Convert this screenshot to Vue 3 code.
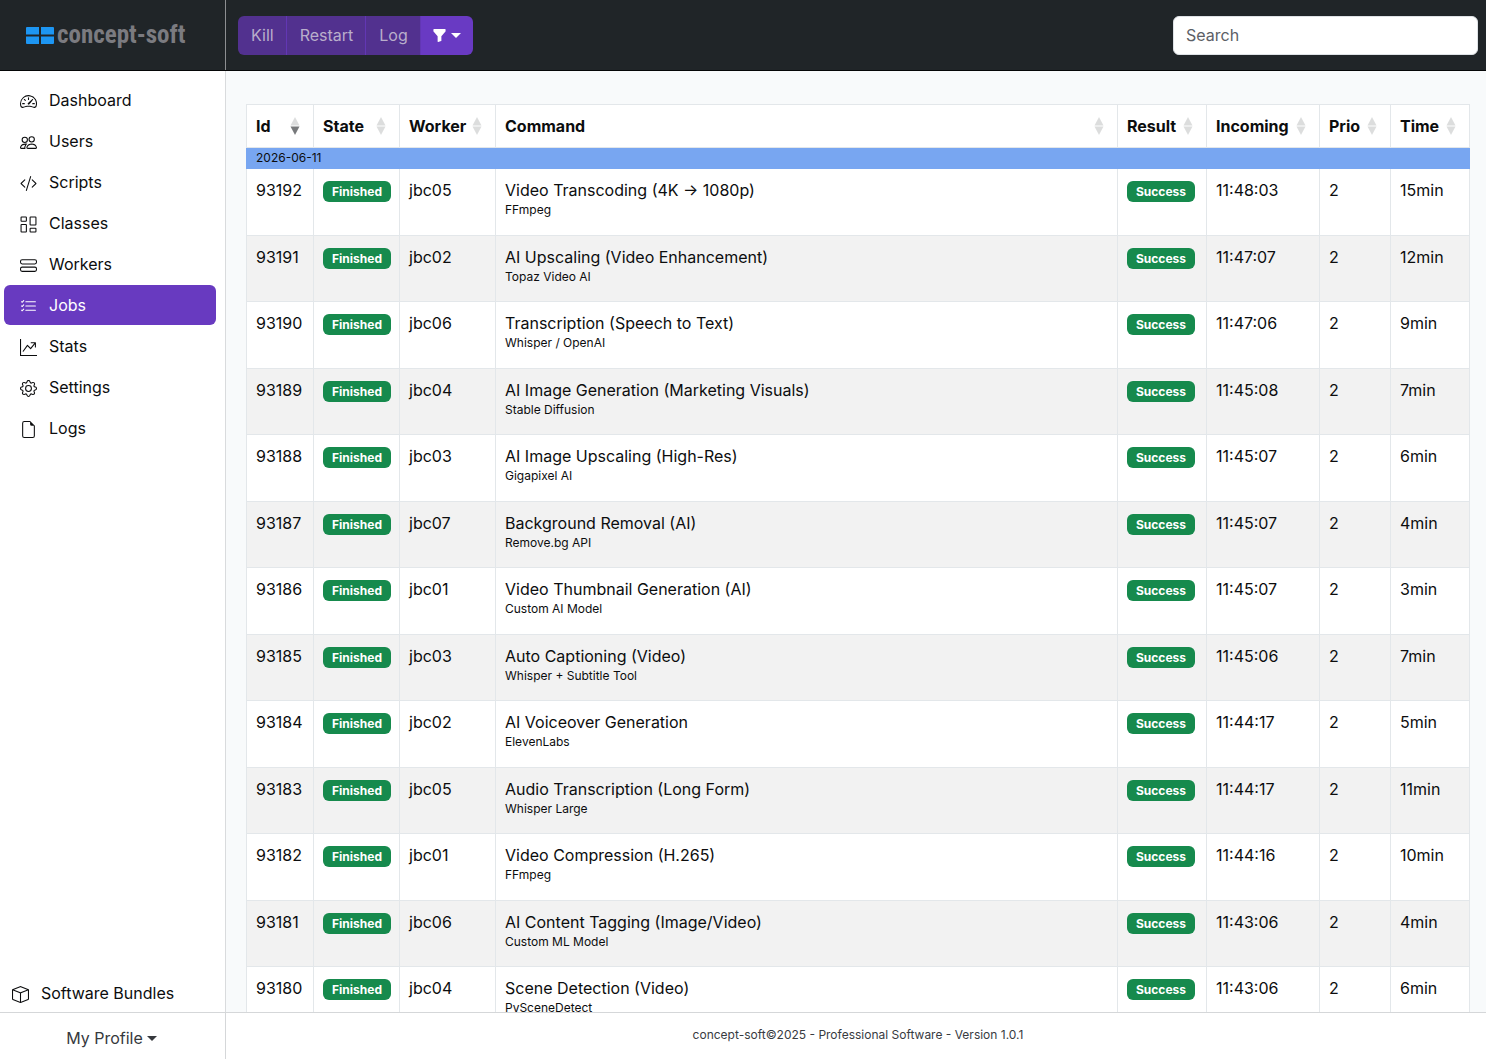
<template>
    <div class="layout">
        <header class="topbar">
            <a href="#" class="brand">
                <svg class="brand-mark" viewBox="0 0 28 17" aria-hidden="true">
                    <path fill="#1d96f3" d="M1 0h12v7.500H0V1a1 1 0 0 1 1-1M15 0h12a1 1 0 0 1 1 1v6.500H15zM0 9.500h13V17H1a1 1 0 0 1-1-1zM15 9.500h13V16a1 1 0 0 1-1 1H15z" />
                </svg>
                <span class="brand-name">concept-soft</span>
            </a>
            <div class="toolbar">
                <div class="btn-group">
                    <button type="button" class="btn" disabled>Kill</button>
                    <button type="button" class="btn" disabled>Restart</button>
                    <button type="button" class="btn" disabled>Log</button>
                    <button type="button" class="btn btn-filter" aria-label="Filter">
                        <svg class="funnel" viewBox="0 0 16 16" aria-hidden="true">
                            <path d="M1.500 1.500A.5.5 0 0 1 2 1h12a.5.5 0 0 1 .5.500v2a.5.5 0 0 1-.128.334L10 8.692V13.500a.5.5 0 0 1-.342.474l-3 1A.5.5 0 0 1 6 14.500V8.692L1.628 3.834A.5.5 0 0 1 1.500 3.500z" />
                        </svg>
                        <span class="caret"></span>
                    </button>
                </div>
                <input type="text" class="search" placeholder="Search" aria-label="Search" />
            </div>
        </header>

        <aside class="sidebar">
            <nav class="nav">
                <a
                    v-for="item in navItems"
                    :key="item.label"
                    href="#"
                    class="nav-link"
                    :class="{ active: item.label === current }"
                >
                    <svg class="icon" viewBox="0 0 16 16" aria-hidden="true">
                        <path v-for="d in item.paths" :key="d" fill-rule="evenodd" :d="d" />
                    </svg>
                    {{ item.label }}
                </a>
            </nav>
            <a href="#" class="bundles">
                <svg class="icon" viewBox="0 0 16 16" aria-hidden="true">
                    <path d="M8.186 1.113a.5.5 0 0 0-.372 0L1.846 3.500 8 5.961 14.154 3.500zM15 4.239l-6.500 2.600v7.922l6.500-2.600V4.240zM7.500 14.762V6.838L1 4.239v7.923zM7.443.184a1.500 1.500 0 0 1 1.114 0l7.129 2.852A.5.5 0 0 1 16 3.500v8.662a1 1 0 0 1-.629.928l-7.185 2.874a.5.5 0 0 1-.372 0L.63 13.090a1 1 0 0 1-.63-.928V3.500a.5.5 0 0 1 .314-.464z" />
                </svg>
                Software Bundles
            </a>
        </aside>

        <main class="content">
            <table class="jobs">
                <colgroup>
                    <col v-for="col in columns" :key="col.key" :class="'col-' + col.key" />
                </colgroup>
                <thead>
                    <tr>
                        <th v-for="col in columns" :key="col.key" scope="col">
                            <div class="head">
                                {{ col.label }}
                                <svg class="sort" :class="{ desc: col.key === 'id' }" viewBox="0 0 10 18" aria-hidden="true">
                                    <path class="up" d="M5 0l4.500 8.500h-9z" />
                                    <path class="down" d="M.5 9.500h9L5 18z" />
                                </svg>
                            </div>
                        </th>
                    </tr>
                </thead>
                <tbody>
                    <tr class="date-row">
                        <td colspan="8">2026-06-11</td>
                    </tr>
                    <tr v-for="job in jobs" :key="job.id" class="job-row">
                        <td>{{ job.id }}</td>
                        <td><span class="badge">Finished</span></td>
                        <td>{{ job.worker }}</td>
                        <td>
                            {{ job.command }}
                            <small class="tool">{{ job.tool }}</small>
                        </td>
                        <td><span class="badge">Success</span></td>
                        <td>{{ job.incoming }}</td>
                        <td>2</td>
                        <td>{{ job.time }}</td>
                    </tr>
                </tbody>
            </table>
        </main>

        <div class="profile">
            <button type="button" class="profile-btn">My Profile <span class="caret"></span></button>
        </div>
        <footer class="footer">concept-soft©2025 - Professional Software - Version 1.0.1</footer>
    </div>
</template>

<script setup>
import { ref } from 'vue';

const current = ref('Jobs');

const navItems = [
    {
        label: 'Dashboard',
        paths: [
            'M8 4a.5.5 0 0 1 .5.5V6a.5.5 0 0 1-1 0V4.500A.5.5 0 0 1 8 4M3.732 5.732a.5.5 0 0 1 .707 0l.915.914a.5.5 0 1 1-.708.708l-.914-.915a.5.5 0 0 1 0-.707M2 10a.5.5 0 0 1 .5-.5h1.586a.5.5 0 0 1 0 1H2.500A.5.5 0 0 1 2 10m9.500 0a.5.5 0 0 1 .5-.5h1.500a.5.5 0 0 1 0 1H12a.5.5 0 0 1-.5-.5m.754-4.246a.39.39 0 0 0-.527-.02L7.547 9.310a.91.91 0 1 0 1.302 1.258l3.434-4.297a.39.39 0 0 0-.029-.518z',
            'M0 10a8 8 0 1 1 15.547 2.661c-.442 1.253-1.845 1.602-2.932 1.250C11.309 13.488 9.475 13 8 13c-1.474 0-3.310.488-4.615.911-1.087.352-2.490.003-2.932-1.250A8 8 0 0 1 0 10m8-7a7 7 0 0 0-6.603 9.329c.203.575.923.876 1.680.630C4.397 12.533 6.358 12 8 12s3.604.532 4.923.960c.757.245 1.477-.056 1.680-.631A7 7 0 0 0 8 3',
        ],
    },
    {
        label: 'Users',
        paths: [
            'M15 14s1 0 1-1-1-4-5-4-5 3-5 4 1 1 1 1zm-7.978-1L7 12.996c.001-.264.167-1.030.760-1.720C8.312 10.629 9.282 10 11 10c1.717 0 2.687.630 3.240 1.276.593.690.758 1.457.760 1.720l-.008.002-.014.002zM11 7a2 2 0 1 0 0-4 2 2 0 0 0 0 4m3-2a3 3 0 1 1-6 0 3 3 0 0 1 6 0M6.936 9.280a6 6 0 0 0-1.230-.247A7 7 0 0 0 5 9c-4 0-5 3-5 4q0 1 1 1h4.216A2.240 2.240 0 0 1 5 13c0-1.010.377-2.042 1.090-2.904.243-.294.526-.569.846-.816M4.920 10A5.500 5.500 0 0 0 4 13H1c0-.260.164-1.030.760-1.724.545-.636 1.492-1.256 3.160-1.275ZM1.500 5.500a3 3 0 1 1 6 0 3 3 0 0 1-6 0m3-2a2 2 0 1 0 0 4 2 2 0 0 0 0-4',
        ],
    },
    {
        label: 'Scripts',
        paths: [
            'M10.478 1.647a.5.5 0 1 0-.956-.294l-4 13a.5.5 0 0 0 .956.294zM4.854 4.146a.5.5 0 0 1 0 .708L1.707 8l3.147 3.146a.5.5 0 0 1-.708.708l-3.500-3.500a.5.5 0 0 1 0-.708l3.500-3.500a.5.5 0 0 1 .708 0m6.292 0a.5.5 0 0 0 0 .708L14.293 8l-3.147 3.146a.5.5 0 0 0 .708.708l3.500-3.500a.5.5 0 0 0 0-.708l-3.500-3.500a.5.5 0 0 0-.708 0',
        ],
    },
    {
        label: 'Classes',
        paths: [
            'M1.500.5h4a1 1 0 0 1 1 1v3a1 1 0 0 1-1 1h-4a1 1 0 0 1-1-1v-3a1 1 0 0 1 1-1m0 1v3h4v-3zM10 .5h4.500a1 1 0 0 1 1 1V8a1 1 0 0 1-1 1H10a1 1 0 0 1-1-1V1.500a1 1 0 0 1 1-1m0 1V8h4.500V1.500zM1.500 7.500h4a1 1 0 0 1 1 1v6a1 1 0 0 1-1 1h-4a1 1 0 0 1-1-1v-6a1 1 0 0 1 1-1m0 1v6h4v-6zM10 11h4.500a1 1 0 0 1 1 1v2.500a1 1 0 0 1-1 1H10a1 1 0 0 1-1-1V12a1 1 0 0 1 1-1m0 1v2.500h4.500V12z',
        ],
    },
    {
        label: 'Workers',
        paths: [
            'M14 10a1 1 0 0 1 1 1v1a1 1 0 0 1-1 1H2a1 1 0 0 1-1-1v-1a1 1 0 0 1 1-1zM2 9a2 2 0 0 0-2 2v1a2 2 0 0 0 2 2h12a2 2 0 0 0 2-2v-1a2 2 0 0 0-2-2z',
            'M14 3a1 1 0 0 1 1 1v1a1 1 0 0 1-1 1H2a1 1 0 0 1-1-1V4a1 1 0 0 1 1-1zM2 2a2 2 0 0 0-2 2v1a2 2 0 0 0 2 2h12a2 2 0 0 0 2-2V4a2 2 0 0 0-2-2z',
        ],
    },
    {
        label: 'Jobs',
        paths: [
            'M5 11.500a.5.5 0 0 1 .5-.5h9a.5.5 0 0 1 0 1h-9a.5.5 0 0 1-.5-.5m0-4a.5.5 0 0 1 .5-.5h9a.5.5 0 0 1 0 1h-9a.5.5 0 0 1-.5-.5m0-4a.5.5 0 0 1 .5-.5h9a.5.5 0 0 1 0 1h-9a.5.5 0 0 1-.5-.5M3.854 2.146a.5.5 0 0 1 0 .708l-1.500 1.500a.5.5 0 0 1-.708 0l-.5-.5a.5.5 0 1 1 .708-.708L2 3.293l1.146-1.147a.5.5 0 0 1 .708 0m0 4a.5.5 0 0 1 0 .708l-1.500 1.500a.5.5 0 0 1-.708 0l-.5-.5a.5.5 0 1 1 .708-.708L2 7.293l1.146-1.147a.5.5 0 0 1 .708 0m0 4a.5.5 0 0 1 0 .708l-1.500 1.500a.5.5 0 0 1-.708 0l-.5-.5a.5.5 0 0 1 .708-.708l.146.147 1.146-1.147a.5.5 0 0 1 .708 0',
        ],
    },
    {
        label: 'Stats',
        paths: [
            'M0 0h1v15h15v1H0zm10 3.500a.5.5 0 0 1 .5-.5h4a.5.5 0 0 1 .5.5v4a.5.5 0 0 1-1 0V4.900l-3.613 4.417a.5.5 0 0 1-.740.037L7.060 6.767l-3.656 5.027a.5.5 0 0 1-.808-.588l4-5.500a.5.5 0 0 1 .758-.060l2.609 2.610L13.445 4H10.500a.5.5 0 0 1-.5-.5',
        ],
    },
    {
        label: 'Settings',
        paths: [
            'M8 4.754a3.246 3.246 0 1 0 0 6.492 3.246 3.246 0 0 0 0-6.492M5.754 8a2.246 2.246 0 1 1 4.492 0 2.246 2.246 0 0 1-4.492 0',
            'M9.796 1.343c-.527-1.790-3.065-1.790-3.592 0l-.094.319a.873.873 0 0 1-1.255.520l-.292-.160c-1.640-.892-3.433.902-2.540 2.541l.159.292a.873.873 0 0 1-.520 1.255l-.319.094c-1.790.527-1.790 3.065 0 3.592l.319.094a.873.873 0 0 1 .520 1.255l-.160.292c-.892 1.640.901 3.434 2.541 2.540l.292-.159a.873.873 0 0 1 1.255.520l.094.319c.527 1.790 3.065 1.790 3.592 0l.094-.319a.873.873 0 0 1 1.255-.520l.292.160c1.640.893 3.434-.902 2.540-2.541l-.159-.292a.873.873 0 0 1 .520-1.255l.319-.094c1.790-.527 1.790-3.065 0-3.592l-.319-.094a.873.873 0 0 1-.520-1.255l.160-.292c.893-1.640-.902-3.433-2.541-2.540l-.292.159a.873.873 0 0 1-1.255-.520zm-2.633.283c.246-.835 1.428-.835 1.674 0l.094.319a1.873 1.873 0 0 0 2.693 1.115l.291-.160c.764-.415 1.600.420 1.184 1.185l-.159.292a1.873 1.873 0 0 0 1.116 2.692l.318.094c.835.246.835 1.428 0 1.674l-.319.094a1.873 1.873 0 0 0-1.115 2.693l.160.291c.415.764-.420 1.600-1.185 1.184l-.291-.159a1.873 1.873 0 0 0-2.693 1.116l-.094.318c-.246.835-1.428.835-1.674 0l-.094-.319a1.873 1.873 0 0 0-2.692-1.115l-.292.160c-.764.415-1.600-.420-1.184-1.185l.159-.291A1.873 1.873 0 0 0 1.945 8.930l-.319-.094c-.835-.246-.835-1.428 0-1.674l.319-.094A1.873 1.873 0 0 0 3.060 4.377l-.160-.292c-.415-.764.420-1.600 1.185-1.184l.292.159a1.873 1.873 0 0 0 2.692-1.115z',
        ],
    },
    {
        label: 'Logs',
        paths: [
            'M14 4.500V14a2 2 0 0 1-2 2H4a2 2 0 0 1-2-2V2a2 2 0 0 1 2-2h5.500zm-3 0A1.500 1.500 0 0 1 9.500 3V1H4a1 1 0 0 0-1 1v12a1 1 0 0 0 1 1h8a1 1 0 0 0 1-1V4.500z',
        ],
    },
];

const columns = [
    { key: 'id', label: 'Id' },
    { key: 'state', label: 'State' },
    { key: 'worker', label: 'Worker' },
    { key: 'command', label: 'Command' },
    { key: 'result', label: 'Result' },
    { key: 'incoming', label: 'Incoming' },
    { key: 'prio', label: 'Prio' },
    { key: 'time', label: 'Time' },
];

const jobs = [
    { id: 93192, worker: 'jbc05', command: 'Video Transcoding (4K → 1080p)', tool: 'FFmpeg', incoming: '11:48:03', time: '15min' },
    { id: 93191, worker: 'jbc02', command: 'AI Upscaling (Video Enhancement)', tool: 'Topaz Video AI', incoming: '11:47:07', time: '12min' },
    { id: 93190, worker: 'jbc06', command: 'Transcription (Speech to Text)', tool: 'Whisper / OpenAI', incoming: '11:47:06', time: '9min' },
    { id: 93189, worker: 'jbc04', command: 'AI Image Generation (Marketing Visuals)', tool: 'Stable Diffusion', incoming: '11:45:08', time: '7min' },
    { id: 93188, worker: 'jbc03', command: 'AI Image Upscaling (High-Res)', tool: 'Gigapixel AI', incoming: '11:45:07', time: '6min' },
    { id: 93187, worker: 'jbc07', command: 'Background Removal (AI)', tool: 'Remove.bg API', incoming: '11:45:07', time: '4min' },
    { id: 93186, worker: 'jbc01', command: 'Video Thumbnail Generation (AI)', tool: 'Custom AI Model', incoming: '11:45:07', time: '3min' },
    { id: 93185, worker: 'jbc03', command: 'Auto Captioning (Video)', tool: 'Whisper + Subtitle Tool', incoming: '11:45:06', time: '7min' },
    { id: 93184, worker: 'jbc02', command: 'AI Voiceover Generation', tool: 'ElevenLabs', incoming: '11:44:17', time: '5min' },
    { id: 93183, worker: 'jbc05', command: 'Audio Transcription (Long Form)', tool: 'Whisper Large', incoming: '11:44:17', time: '11min' },
    { id: 93182, worker: 'jbc01', command: 'Video Compression (H.265)', tool: 'FFmpeg', incoming: '11:44:16', time: '10min' },
    { id: 93181, worker: 'jbc06', command: 'AI Content Tagging (Image/Video)', tool: 'Custom ML Model', incoming: '11:43:06', time: '4min' },
    { id: 93180, worker: 'jbc04', command: 'Scene Detection (Video)', tool: 'PySceneDetect', incoming: '11:43:06', time: '6min' },
];
</script>

<style>
body {
    margin: 0;
}
</style>

<style scoped>
.layout {
    display: grid;
    grid-template: 71px minmax(0, 1fr) 47px / 226px minmax(0, 1fr);
    height: 100vh;
    background: #ffffff;
    color: #0c0d0e;
    font-family: Inter, 'Liberation Sans', sans-serif;
    font-size: 16px;
    line-height: 24px;
}

.layout * {
    box-sizing: border-box;
}

a {
    color: inherit;
    text-decoration: none;
}

button,
input {
    margin: 0;
    font: inherit;
}

.topbar {
    grid-column: 1 / -1;
    display: grid;
    grid-template-columns: 226px minmax(0, 1fr);
    border-bottom: 1px solid #050607;
    background: #202528;
}

.brand {
    display: flex;
    align-items: center;
    gap: 3px;
    padding-left: 26px;
    border-right: 1px solid #8d8f91;
    color: #7b7b80;
}

.brand-mark {
    width: 28px;
    height: 17px;
}

.brand-name {
    font-family: 'Roboto Condensed', 'Liberation Sans Narrow', 'Liberation Sans', sans-serif;
    font-size: 25px;
    font-weight: 700;
    line-height: 32px;
}

.toolbar {
    display: flex;
    align-items: center;
    justify-content: space-between;
    padding: 0 8px 0 12px;
}

.btn-group {
    display: flex;
    overflow: hidden;
    border-radius: 6px;
}

.btn {
    height: 39px;
    padding: 0 12px 0 13px;
    border: 0;
    border-right: 1px solid #6237b4;
    background: #52318f;
    color: #b9aecb;
}

.btn-filter {
    display: flex;
    align-items: center;
    gap: 4px;
    padding: 0 12px 0 11px;
    border-right: 0;
    background: #693ac3;
    color: #ffffff;
}

.funnel {
    width: 15px;
    height: 15px;
    fill: currentColor;
}

.caret {
    display: inline-block;
    border: 5px solid transparent;
    border-top-color: currentColor;
    border-bottom: 0;
}

.search {
    width: 305px;
    height: 39px;
    padding: 0 12px;
    border: 1px solid #dee2e6;
    border-radius: 6px;
    background: #ffffff;
}

.search::placeholder {
    color: #5c6066;
    opacity: 1;
}

.sidebar {
    display: flex;
    flex-direction: column;
    justify-content: space-between;
    border-right: 1px solid #d9dbdd;
}

.nav {
    display: flex;
    flex-direction: column;
    gap: 1px;
    padding: 9px 9px 0 4px;
}

.nav-link {
    display: flex;
    align-items: center;
    gap: 12px;
    height: 40px;
    padding-left: 16px;
    border-radius: 6px;
}

.nav-link.active {
    background: #683ac0;
    color: #ffffff;
}

.icon {
    width: 17px;
    height: 17px;
    margin-top: 3px;
    fill: currentColor;
}

.bundles {
    display: flex;
    align-items: center;
    gap: 12px;
    padding: 0 12px 7px;
}

.content {
    overflow: hidden;
    padding: 33px 16px 0 20px;
    background: #f8fafb;
}

.jobs {
    width: 100%;
    table-layout: fixed;
    border-collapse: collapse;
    background: #ffffff;
}

.col-id {
    width: 67px;
}

.col-state {
    width: 86px;
}

.col-worker {
    width: 96px;
}

.col-result {
    width: 89px;
}

.col-incoming {
    width: 113px;
}

.col-prio {
    width: 71px;
}

.col-time {
    width: 79px;
}

.jobs th,
.jobs td {
    padding: 0 8px 0 9px;
    border: 1px solid #e3e7ea;
    text-align: left;
    vertical-align: top;
}

.jobs th {
    height: 43px;
    font-weight: 700;
    vertical-align: middle;
}

.head {
    display: flex;
    align-items: center;
    justify-content: space-between;
    padding-right: 5px;
}

.sort {
    flex: none;
    width: 10px;
    height: 18px;
    fill: #dcdddd;
}

.sort.desc .down {
    fill: #77797b;
}

.jobs .date-row td {
    height: 21px;
    border-color: #78a6f1;
    background: #78a6f1;
    font-size: 12px;
    line-height: 20px;
}

.jobs .job-row td {
    height: 67px;
    padding-top: 9px;
}

.jobs .job-row:nth-child(odd) td {
    height: 66px;
    background: #f2f2f2;
}

.tool {
    display: block;
    font-size: 12px;
    line-height: 16px;
}

.badge {
    display: block;
    width: 68px;
    height: 21px;
    margin-top: 3px;
    border-radius: 6px;
    background: #168a4d;
    color: #ffffff;
    font-size: 12px;
    font-weight: 700;
    line-height: 21px;
    text-align: center;
}

.profile {
    display: flex;
    align-items: center;
    justify-content: center;
    border-top: 1px solid #d5d7d9;
    border-right: 1px solid #d5d7d9;
}

.profile-btn {
    display: flex;
    align-items: center;
    gap: 4px;
    padding: 4px 2px 0 0;
    border: 0;
    background: transparent;
    color: #36393d;
}

.footer {
    padding: 10px 12px 0 16px;
    border-top: 1px solid #d5d7d9;
    color: #383b3f;
    font-size: 12px;
    text-align: center;
}
</style>
